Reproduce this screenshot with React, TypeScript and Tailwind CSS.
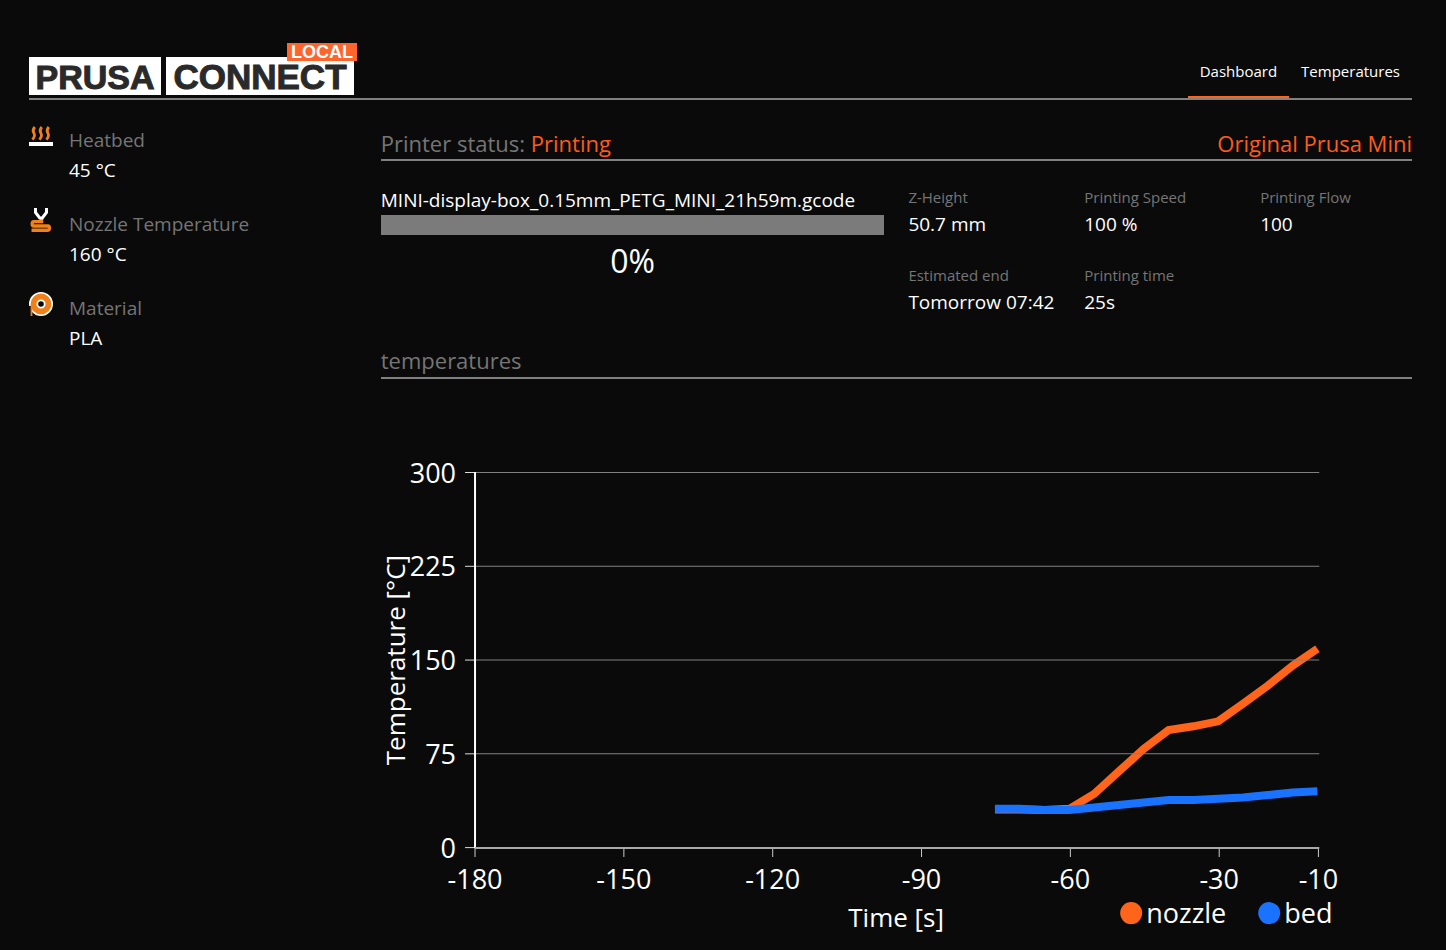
import { FC, ReactNode } from 'react';

const HeatbedIcon: FC = () => (
  <svg width="24" height="24" viewBox="0 0 24 24" fill="none">
    <g stroke="#f08019" strokeWidth="2.8">
      <path d="M5.800 3C3.200 6 3.800 7.500 4.800 9S6.200 12.500 3.400 15.600" />
      <path d="M12.800 3c-2.600 3-2 4.500-1 6s1.400 3.500-1.400 6.600" />
      <path d="M19.800 3c-2.600 3-2 4.500-1 6s1.400 3.500-1.400 6.600" />
    </g>
    <path d="M0 18h24v4H0z" fill="#fff" />
  </svg>
);

const NozzleIcon: FC = () => (
  <svg width="24" height="24" viewBox="0 0 24 24" fill="none">
    <path
      d="M12.500 11v2.600H4.800q-1.600 0-1.600 2.200t1.600 2.200H19q1.400 0 1.400 2.100T19 22.200H2.500"
      stroke="#f08019"
      strokeWidth="3.400"
    />
    <path d="M6.500 0v4.500l4.200 5.500h2.600l4.200-5.500V0" stroke="#fff" strokeWidth="3" />
  </svg>
);

const MaterialIcon: FC = () => (
  <svg width="24" height="24" viewBox="0 0 24 24" fill="none">
    <circle cx="12" cy="12" r="11.200" fill="#f08019" stroke="#fff" strokeWidth="1.600" />
    <circle cx="12" cy="12" r="3.700" fill="#0a0a0a" stroke="#fff" strokeWidth="1.800" />
    <path d="M0 14h2v10H0z" fill="#0a0a0a" />
    <path d="M2.500 13v11" stroke="#f08019" strokeWidth="1.800" />
  </svg>
);

const Logo: FC = () => (
  <a
    href="#"
    aria-label="Prusa Connect Local"
    className="relative flex gap-[5px] font-['Liberation_Sans',sans-serif] font-bold text-[34px] leading-[38px] text-[#2a2a2a]"
  >
    <span className="bg-white w-33 h-[38px] text-center leading-10 [-webkit-text-stroke:1px_#2a2a2a]">
      PRUSA
    </span>
    <span className="bg-white w-47 h-[38px] text-center text-[35px] leading-10 [-webkit-text-stroke:1px_#2a2a2a]">
      CONNECT
    </span>
    <span className="absolute -right-[3px] -top-[14px] bg-[#ff652a] px-1 text-lg leading-[18px] text-white">
      LOCAL
    </span>
  </a>
);

const sensors: { label: string; value: string; icon: ReactNode }[] = [
  { label: 'Heatbed', value: '45 °C', icon: <HeatbedIcon /> },
  { label: 'Nozzle Temperature', value: '160 °C', icon: <NozzleIcon /> },
  { label: 'Material', value: 'PLA', icon: <MaterialIcon /> },
];

const stats = [
  { label: 'Z-Height', value: '50.7 mm' },
  { label: 'Printing Speed', value: '100 %' },
  { label: 'Printing Flow', value: '100' },
  { label: 'Estimated end', value: 'Tomorrow 07:42' },
  { label: 'Printing time', value: '25s' },
];

const times = [-180, -150, -120, -90, -60, -30, -10];
const temps = [0, 75, 150, 225, 300];

// one sample every 5 seconds, from -75 s to -10 s
const nozzle = [30.5, 30.5, 30, 31, 43, 61, 79, 94, 97, 101, 115, 129.5, 145.5, 159];
const bed = [31, 31, 30, 30, 32, 34, 36, 38, 38, 39, 40, 42, 44, 45];

const toX = (t: number) => 94 + (t + 180) * 4.96;
const toY = (temp: number) => 447.5 - temp * 1.25;
const toPoints = (data: number[]) =>
  data.map((temp, i) => `${toX(-75 + i * 5) - 1},${toY(temp)}`).join(' ');

const TemperatureChart: FC = () => (
  <svg
    viewBox="0 0 1031 540"
    className="block w-full overflow-visible text-[27px]"
    fill="#fff"
    role="img"
    aria-label="Temperature chart"
  >
    <g fill="none" strokeWidth="8">
      <polyline points={toPoints(nozzle)} stroke="#fe651b" />
      <polyline points={toPoints(bed)} stroke="#1a73fe" />
    </g>
    {temps.map((temp) => (
      <g key={temp}>
        <path d={`M94 ${toY(temp)}H938`} stroke="#808080" />
        <path d={`M84 ${toY(temp)}h10`} stroke="#ddd" />
        <text x="75" y={toY(temp) + 10} textAnchor="end">
          {temp}
        </text>
      </g>
    ))}
    {times.map((t) => (
      <g key={t}>
        <path d={`M${toX(t)} 448v9`} stroke="#ccc" />
        <text x={toX(t)} y="489" textAnchor="middle">
          {t}
        </text>
      </g>
    ))}
    <path d="M94 72v376" stroke="#fff" strokeWidth="2" />
    <path d="M94 448h844" stroke="#aaa" strokeWidth="2" />
    <text transform="translate(24 260) rotate(-90)" textAnchor="middle" className="text-[26px]">
      Temperature [°C]
    </text>
    <text x="515" y="527" textAnchor="middle" className="text-[26px]">
      Time [s]
    </text>
    <circle cx="750" cy="513" r="11" fill="#fe651b" />
    <text x="765" y="523">
      nozzle
    </text>
    <circle cx="888" cy="513" r="11" fill="#1a73fe" />
    <text x="903" y="523">
      bed
    </text>
  </svg>
);

const App: FC = () => {
  return (
    <div className="min-h-screen bg-[#0a0a0a] pl-[29px] pr-[34px] pt-9 text-white font-['Open_Sans',sans-serif]">
      <header className="flex items-end justify-between h-16 border-b-2 border-[#808080]">
        <div className="pb-[3px]">
          <Logo />
        </div>
        <nav className="flex text-[15px] leading-6">
          <a href="#" className="px-3 pb-[13px] border-b-2 border-[#fe651b]">
            Dashboard
          </a>
          <a href="#" className="px-3 pb-[13px] border-b-2 border-transparent">
            Temperatures
          </a>
        </nav>
      </header>

      <div className="grid grid-cols-8 gap-6">
        <aside className="col-span-2 pt-6 flex flex-col gap-[23px]">
          {sensors.map(({ label, value, icon }) => (
            <div key={label} className="flex gap-4">
              {icon}
              <dl className="pt-px text-[19px] leading-[30px]">
                <dt className="text-[#757575]">{label}</dt>
                <dd>{value}</dd>
              </dl>
            </div>
          ))}
        </aside>

        <main className="col-span-6">
          <div className="mt-7 pb-px flex justify-between border-b-2 border-[#808080] text-[22px] leading-[30px]">
            <h1 className="text-[#757575]">
              Printer status: <span className="text-[#fe5b1a]">Printing</span>
            </h1>
            <p className="text-[#fe5b1a]">Original Prusa Mini</p>
          </div>

          <div className="mt-6 grid grid-cols-2 gap-6">
            <div>
              <p className="text-[19px] leading-[30px]">
                MINI-display-box_0.15mm_PETG_MINI_21h59m.gcode
              </p>
              <div
                role="progressbar"
                aria-valuenow={0}
                aria-label="Print progress"
                className="h-5 bg-[#7b7b7b]"
              />
              <p className="mt-1 text-center text-[32px] leading-11">0%</p>
            </div>
            <dl className="grid grid-cols-3 gap-6">
              {stats.map(({ label, value }) => (
                <div key={label}>
                  <dt className="text-[15px] leading-6 text-[#757575]">{label}</dt>
                  <dd className="text-[19px] leading-[30px] whitespace-nowrap">{value}</dd>
                </div>
              ))}
            </dl>
          </div>

          <h2 className="mt-7 pb-0.5 border-b-2 border-[#808080] text-[22px] leading-[30px] text-[#757575]">
            temperatures
          </h2>
          <div className="mt-[21px]">
            <TemperatureChart />
          </div>
        </main>
      </div>
    </div>
  );
};

export default App;
